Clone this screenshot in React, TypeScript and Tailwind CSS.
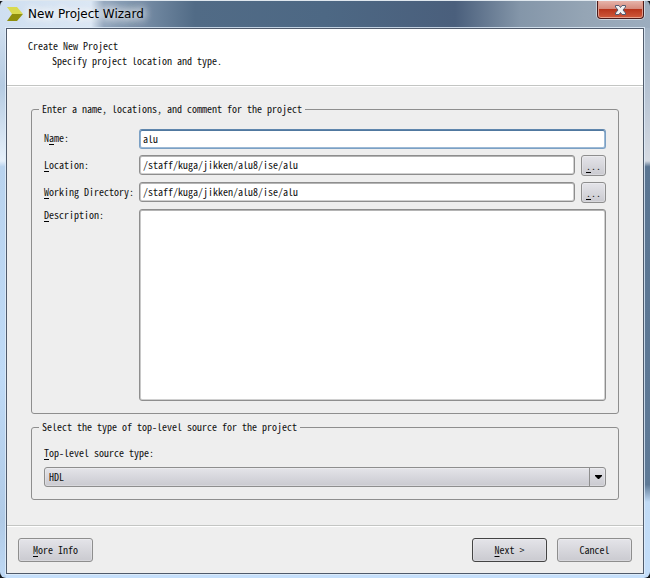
import { ReactNode, useState } from "react";

const buttonBase =
  "rounded-[3px] border bg-linear-to-b from-[#e4e4e9] to-[#cacad0] leading-3 shadow-[inset_0_0_0_1px_rgba(255,255,255,0.25)]";

const fieldBase =
  "h-5 min-w-0 flex-1 rounded-[3px] border bg-white px-[3px] pb-[2px] leading-3 outline-none";

const plainField =
  "border-[#8e8e8e] shadow-[inset_0_1px_0_#b4b4b4,inset_1px_0_0_#c8c8c8,inset_-1px_0_0_#d0d0d0,inset_0_-1px_0_#d0d0d0]";

// Underlined access key inside a label
function Key({ children }: { children: ReactNode }) {
  return (
    <span className="underline decoration-black decoration-1 underline-offset-2">
      {children}
    </span>
  );
}

function Group({ title, children }: { title: string; children: ReactNode }) {
  return (
    <fieldset className="rounded-[3px] border border-[#8e8e8e] px-3 pb-3">
      <legend className="-ml-[5px] px-[3px] leading-3">{title}</legend>
      {children}
    </fieldset>
  );
}

function TitleBar() {
  return (
    <header className="flex h-7 items-start justify-between border-t border-[#dfe7ee] pl-[7px] pr-[6px]">
      <div className="flex h-[26px] items-center gap-[5px]">
        <svg width="16" height="14" viewBox="0 0 16 14" aria-hidden>
          <path d="M0 0h10l6 7H5z" fill="#d9da50" />
          <path d="M5 7h11l-6 7H0z" fill="#8f8f0c" />
        </svg>
        <h1 className="font-['DejaVu_Sans',sans-serif] text-[12px] leading-4 text-black [text-shadow:0_0_8px_#fff,0_0_8px_#fff,0_0_12px_#fff]">
          New Project Wizard
        </h1>
      </div>
      <button
        aria-label="Close"
        className="flex h-[18px] w-[47px] items-center justify-center rounded-b-[4px] border border-t-0 border-[#4b1a1a] bg-[linear-gradient(#e6b3a9,#d58a7c_46%,#b8351c_50%,#cf5a3c)] shadow-[0_0_0_1px_rgba(255,255,255,0.5),inset_0_-1px_0_#e8a08c,inset_1px_0_0_#e09a8a,inset_-1px_0_0_#e09a8a]"
      >
        <svg width="11" height="10" viewBox="0 0 11 10" aria-hidden>
          <path
            d="M.5.5h3.500l1.500 2L7 .5h3.500V2L8 5l2.500 3v1.500H7l-1.500-2-1.500 2H.5V8L3 5 .5 2z"
            fill="#f2f2f2"
            stroke="#535a70"
          />
        </svg>
      </button>
    </header>
  );
}

export default function App() {
  const [name, setName] = useState("alu");
  const [location, setLocation] = useState("/staff/kuga/jikken/alu8/ise/alu");
  const [workDir, setWorkDir] = useState("/staff/kuga/jikken/alu8/ise/alu");

  return (
    <div className="bg-[#16181c]">
      <div className="flex min-h-screen flex-col rounded-[6px] bg-[linear-gradient(#d0dfef,#b5cbe2_10%,#e6f0fa_23%,#b9d3ee_24%,#bfdaf6_60%,#b0cae6_85%,#c5dffb),linear-gradient(#a3b4c6,#b9c5d4_12%,#d5dae2_23%,#5a7592_24%,#5f7a97_79%,#c0daf5_82%,#c5dffb),linear-gradient(#c5dffb,#c5dffb),linear-gradient(90deg,#cfdff0,#dbe7f4_14%,#92a6bd_16%,#516b86_30%,#4d6884_50%,#4a5f7c_70%,#8496a9_80%,#95a5b5_90%,#9cadbf)] bg-[position:left_28px,right_28px,bottom,top] bg-[size:6px_100%,6px_100%,100%_5px,100%_100%] bg-no-repeat font-['Noto_Sans_Mono_CJK_JP','Noto_Sans_CJK_JP',monospace] text-[10px] text-[#111]">
        <TitleBar />
        <main className="mx-[6px] mb-1 flex flex-1 flex-col border border-[#4f5a6b] bg-[#eee] shadow-[0_0_0_1px_rgba(225,238,250,0.8)]">
          <div className="h-14 bg-white px-[21px] pt-[9px]">
            <h2 className="leading-[15px]">Create New Project</h2>
            <p className="pl-6 leading-[15px]">Specify project location and type.</p>
          </div>
          <hr className="h-[2px] border-t border-b border-t-[#c3c5c3] border-b-white" />

          <form className="flex flex-1 flex-col" onSubmit={(e) => e.preventDefault()}>
            <div className="flex flex-1 flex-col gap-[7px] px-6 pt-4">
              <Group title="Enter a name, locations, and comment for the project">
                <div className="grid grid-cols-[95px_1fr] items-center gap-y-[6px] pt-[14px] leading-3">
                  <label htmlFor="name" className="pb-[2px]">
                    N<Key>a</Key>me:
                  </label>
                  <div className="flex">
                    <input
                      id="name"
                      value={name}
                      onChange={(e) => setName(e.target.value)}
                      className={`${fieldBase} border-[#7ba0c4] border-t-[#5f86ad] shadow-[inset_0_1px_0_#50789f,inset_1px_0_0_#8fb0d0,inset_-1px_0_0_#9dbad6,inset_0_-1px_0_#9dbad6]`}
                    />
                  </div>

                  <label htmlFor="location" className="pb-[2px]">
                    <Key>L</Key>ocation:
                  </label>
                  <div className="flex gap-[6px]">
                    <input
                      id="location"
                      value={location}
                      onChange={(e) => setLocation(e.target.value)}
                      className={`${fieldBase} ${plainField}`}
                    />
                    <button
                      type="button"
                      aria-label="Browse location"
                      className={`${buttonBase} h-[21px] w-[25px] border-[#8e8e8e]`}
                    >
                      <Key>.</Key>..
                    </button>
                  </div>

                  <label htmlFor="workdir" className="pb-[2px]">
                    <Key>W</Key>orking Directory:
                  </label>
                  <div className="flex gap-[6px]">
                    <input
                      id="workdir"
                      value={workDir}
                      onChange={(e) => setWorkDir(e.target.value)}
                      className={`${fieldBase} ${plainField}`}
                    />
                    <button
                      type="button"
                      aria-label="Browse working directory"
                      className={`${buttonBase} h-[21px] w-[25px] border-[#8e8e8e]`}
                    >
                      <Key>.</Key>..
                    </button>
                  </div>

                  <label htmlFor="description" className="self-start">
                    <Key>D</Key>escription:
                  </label>
                  <textarea
                    id="description"
                    className={`block h-48 w-full resize-none rounded-[3px] border bg-white p-1 outline-none ${plainField}`}
                  />
                </div>
              </Group>

              <Group title="Select the type of top-level source for the project">
                <label htmlFor="source" className="block pt-[14px] pb-2 leading-3">
                  <Key>T</Key>op-level source type:
                </label>
                <div className="relative">
                  <select
                    id="source"
                    className={`${buttonBase} block h-5 w-full appearance-none border-[#8e8e8e] px-1`}
                  >
                    <option>HDL</option>
                  </select>
                  <span className="pointer-events-none absolute inset-y-0 right-0 flex w-[17px] items-center justify-center border-l border-[#8e8e8e]">
                    <svg width="7" height="4" viewBox="0 0 7 4" aria-hidden>
                      <path d="M0 0h7v1L4 4H3L0 1z" fill="#000" />
                    </svg>
                  </span>
                </div>
              </Group>
            </div>

            <hr className="h-[2px] border-t border-b border-t-[#c3c5c3] border-b-white" />
            <footer className="flex gap-[10px] px-[11px] py-[11px]">
              <button type="button" className={`${buttonBase} mr-auto h-6 w-[75px] border-[#8e8e8e]`}>
                <Key>M</Key>ore Info
              </button>
              <button type="submit" className={`${buttonBase} h-6 w-[75px] border-[#444]`}>
                <Key>N</Key>ext &gt;
              </button>
              <button type="button" className={`${buttonBase} h-6 w-[75px] border-[#8e8e8e]`}>
                Cancel
              </button>
            </footer>
          </form>
        </main>
      </div>
    </div>
  );
}
